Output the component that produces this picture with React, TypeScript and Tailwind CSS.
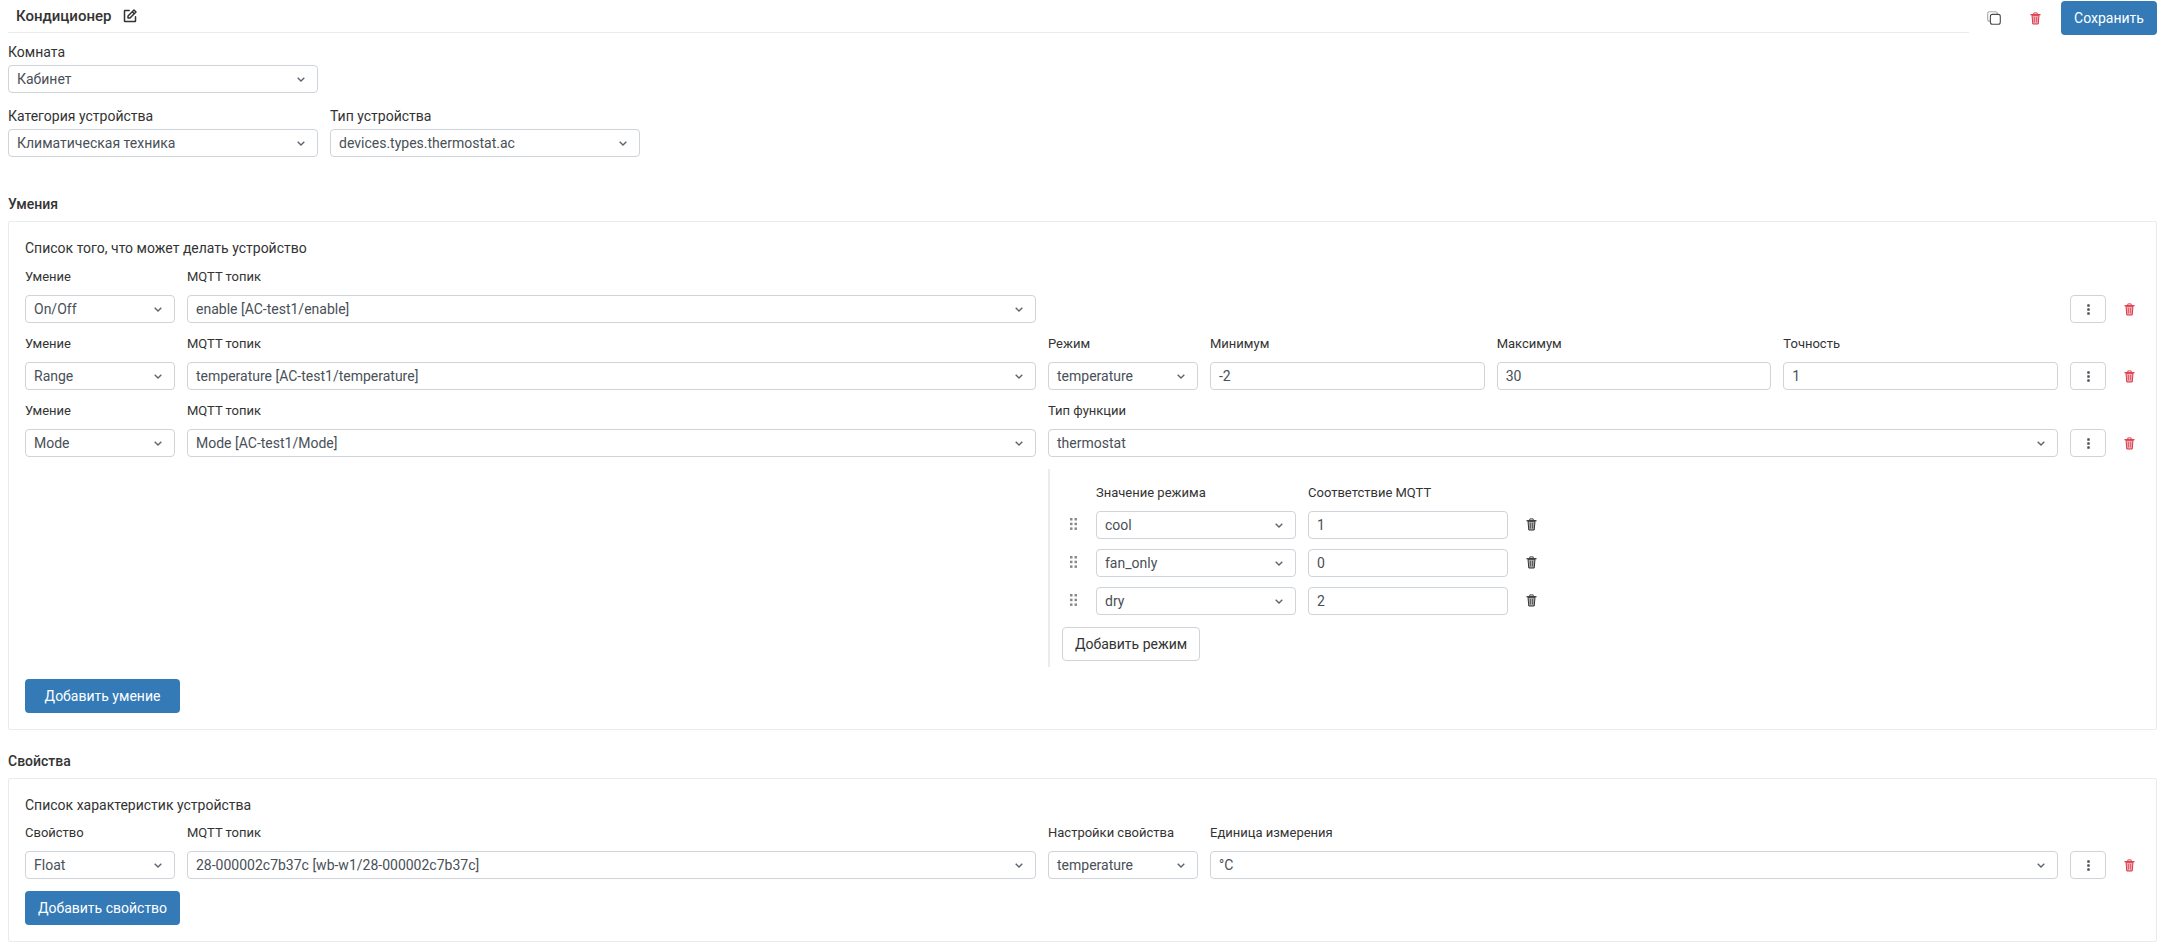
import { PiNotePencilBold } from "react-icons/pi";

function Chevron() {
  return (
    <svg width="8" height="5" viewBox="0 0 8 5" fill="none" className="shrink-0">
      <path d="M0.7 0.8 4 4 7.3 0.8" stroke="#5c646c" strokeWidth="1.4" />
    </svg>
  );
}

function TrashIcon({ className = "" }: { className?: string }) {
  return (
    <svg width="11" height="13" viewBox="0 0 11 13" fill="none" className={className}>
      <path d="M2 3.2 2.8 12h5.4L9 3.2Z" fill="currentColor" fillOpacity="0.4" stroke="currentColor" strokeWidth="1" />
      <path d="M0.5 2.7h10" stroke="currentColor" strokeWidth="1.2" />
      <path d="M3.8 2.2V0.9h3.4v1.3" stroke="currentColor" strokeWidth="0.9" />
      <path d="M4.4 4.8v5.6M6.6 4.8v5.6" stroke="currentColor" strokeWidth="0.7" />
    </svg>
  );
}

function CopyIcon() {
  return (
    <svg width="14" height="14" viewBox="0 0 14 14" fill="none">
      <rect x="0.7" y="0.7" width="9.6" height="9.6" rx="2" stroke="#a8a8a8" strokeWidth="1.1" />
      <rect x="3.4" y="3.4" width="9.9" height="9.9" rx="2" fill="white" stroke="#4a4a4a" strokeWidth="1.1" />
    </svg>
  );
}

function KebabIcon() {
  return (
    <svg width="3" height="11" viewBox="0 0 3 11" fill="#495057">
      <rect x="0.25" y="0.25" width="2.5" height="2.5" rx="0.6" />
      <rect x="0.25" y="4.25" width="2.5" height="2.5" rx="0.6" />
      <rect x="0.25" y="8.25" width="2.5" height="2.5" rx="0.6" />
    </svg>
  );
}

function DragHandle() {
  return (
    <svg width="7" height="12" viewBox="0 0 7 12" fill="#8a8a8a" className="mx-[19.5px] -mt-[3px] shrink-0">
      <rect width="2.5" height="2.5" />
      <rect x="4.5" width="2.5" height="2.5" />
      <rect y="4.7" width="2.5" height="2.5" />
      <rect x="4.5" y="4.7" width="2.5" height="2.5" />
      <rect y="9.4" width="2.5" height="2.5" />
      <rect x="4.5" y="9.4" width="2.5" height="2.5" />
    </svg>
  );
}

function Select({ value, className = "" }: { value: string; className?: string }) {
  return (
    <div
      className={`flex h-[28px] items-center justify-between rounded-[4px] border border-[#ced4da] bg-white pl-2 pr-3 text-sm text-[#495057] ${className}`}
    >
      <span>{value}</span>
      <Chevron />
    </div>
  );
}

function Input({ value, className = "" }: { value: string; className?: string }) {
  return (
    <div
      className={`flex h-[28px] items-center rounded-[4px] border border-[#ced4da] bg-white px-2 text-sm text-[#495057] ${className}`}
    >
      {value}
    </div>
  );
}

function Field({
  label,
  className = "",
  children,
}: {
  label: string;
  className?: string;
  children: React.ReactNode;
}) {
  return (
    <div className={`flex flex-col ${className}`}>
      <label className="mb-[10px] h-[16px] text-[13px] leading-[16px]">{label}</label>
      {children}
    </div>
  );
}

function RowActions() {
  return (
    <div className="flex items-center gap-3 self-end">
      <button className="flex h-[28px] w-[36px] items-center justify-center rounded-[4px] border border-[#ced4da] bg-white">
        <KebabIcon />
      </button>
      <button className="flex h-[28px] w-[22px] items-center justify-center text-[#dc3545]">
        <TrashIcon />
      </button>
    </div>
  );
}

function SkillRow({
  skill,
  topic,
  children,
}: {
  skill: string;
  topic: string;
  children?: React.ReactNode;
}) {
  return (
    <div className="flex gap-3">
      <Field label="Умение" className="w-[150px]">
        <Select value={skill} />
      </Field>
      <Field label="MQTT топик" className="w-[849px]">
        <Select value={topic} />
      </Field>
      <div className="flex flex-1 gap-3">{children}</div>
      <RowActions />
    </div>
  );
}

function ModeRow({ mode, value }: { mode: string; value: string }) {
  return (
    <div className="flex items-center">
      <DragHandle />
      <Select value={mode} className="w-[200px]" />
      <Input value={value} className="ml-3 w-[200px]" />
      <TrashIcon className="ml-[18px] -mt-[1px] text-[#333333]" />
    </div>
  );
}

export default function App() {
  return (
    <div className="min-h-[948px] bg-white pl-2 pr-[5px] font-['Roboto',sans-serif] text-[#333333]">
      {/* Header */}
      <div className="flex items-start">
        <div className="flex h-[33px] flex-1 items-center gap-[11px] border-b border-[#e9ecef] pl-2">
          <span className="text-[15px] font-medium">Кондиционер</span>
          <PiNotePencilBold className="h-4 w-4" />
        </div>
        <div className="flex items-center pt-px">
          <button className="ml-[18px] flex h-[34px] w-[14px] items-center justify-center">
            <CopyIcon />
          </button>
          <button className="ml-[27px] flex h-[34px] w-[14px] items-center justify-center text-[#dc3545]">
            <TrashIcon />
          </button>
          <button className="ml-[19px] h-[34px] w-[96px] rounded-[4px] bg-[#337ab7] text-sm text-white">
            Сохранить
          </button>
        </div>
      </div>

      {/* Room and category */}
      <div className="mt-[9px] w-[310px]">
        <div className="mb-[4px] text-sm leading-[17px]">Комната</div>
        <Select value="Кабинет" />
      </div>
      <div className="mt-[15px] flex gap-3">
        <div className="w-[310px]">
          <div className="mb-[4px] text-sm leading-[17px]">Категория устройства</div>
          <Select value="Климатическая техника" />
        </div>
        <div className="w-[310px]">
          <div className="mb-[4px] text-sm leading-[17px]">Тип устройства</div>
          <Select value="devices.types.thermostat.ac" />
        </div>
      </div>

      {/* Skills */}
      <h2 className="mt-[39px] mb-[8px] text-sm font-medium leading-[17px]">Умения</h2>
      <div className="rounded-[2px] border border-[#e9ecef] px-4 pt-[18px] pb-[16px]">
        <p className="mb-[12px] text-sm leading-[17px]">Список того, что может делать устройство</p>
        <div className="flex flex-col gap-[13px]">
          <SkillRow skill="On/Off" topic="enable [AC-test1/enable]" />
          <SkillRow skill="Range" topic="temperature [AC-test1/temperature]">
            <Field label="Режим" className="w-[150px]">
              <Select value="temperature" />
            </Field>
            <Field label="Минимум" className="flex-1">
              <Input value="-2" />
            </Field>
            <Field label="Максимум" className="flex-1">
              <Input value="30" />
            </Field>
            <Field label="Точность" className="flex-1">
              <Input value="1" />
            </Field>
          </SkillRow>
          <SkillRow skill="Mode" topic="Mode [AC-test1/Mode]">
            <Field label="Тип функции" className="flex-1">
              <Select value="thermostat" />
            </Field>
          </SkillRow>
        </div>

        {/* Mode values */}
        <div className="mt-3 ml-[1023px] h-[198px] border-l-2 border-[#e9ecef]">
          <div className="flex pt-4 pl-[46px] text-[13px] leading-[16px]">
            <span className="w-[212px]">Значение режима</span>
            <span>Соответствие MQTT</span>
          </div>
          <div className="mt-[10px] flex flex-col gap-[10px]">
            <ModeRow mode="cool" value="1" />
            <ModeRow mode="fan_only" value="0" />
            <ModeRow mode="dry" value="2" />
          </div>
          <button className="mt-3 ml-3 h-[34px] w-[138px] rounded-[4px] border border-[#ced4da] bg-white text-sm">
            Добавить режим
          </button>
        </div>

        <button className="mt-3 h-[34px] w-[155px] rounded-[4px] bg-[#337ab7] text-sm text-white">
          Добавить умение
        </button>
      </div>

      {/* Properties */}
      <h2 className="mt-[23px] mb-[8px] text-sm font-medium leading-[17px]">Свойства</h2>
      <div className="rounded-[2px] border border-[#e9ecef] px-4 pt-[18px] pb-[16px]">
        <p className="mb-[11px] text-sm leading-[17px]">Список характеристик устройства</p>
        <div className="flex gap-3">
          <Field label="Свойство" className="w-[150px]">
            <Select value="Float" />
          </Field>
          <Field label="MQTT топик" className="w-[849px]">
            <Select value="28-000002c7b37c [wb-w1/28-000002c7b37c]" />
          </Field>
          <Field label="Настройки свойства" className="w-[150px]">
            <Select value="temperature" />
          </Field>
          <Field label="Единица измерения" className="flex-1">
            <Select value="°C" />
          </Field>
          <RowActions />
        </div>
        <button className="mt-3 h-[34px] w-[155px] rounded-[4px] bg-[#337ab7] text-sm text-white">
          Добавить свойство
        </button>
      </div>
    </div>
  );
}
